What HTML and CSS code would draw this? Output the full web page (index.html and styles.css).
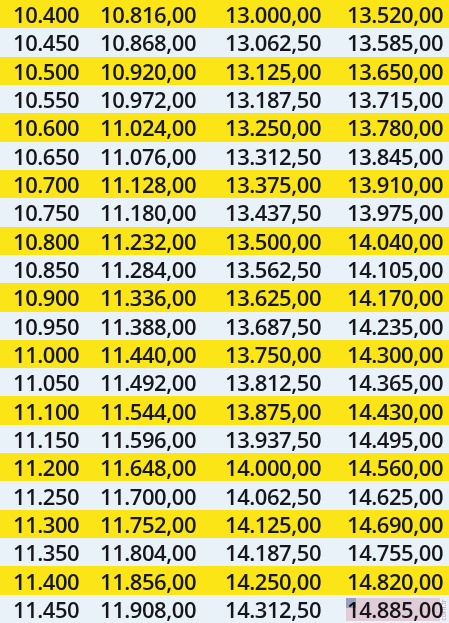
FILE: index.html
```html
<!DOCTYPE html>
<html lang="tr">
<head>
<meta charset="utf-8">
<title>Tablo</title>
<link rel="stylesheet" href="styles.css">
</head>
<body>
<div class="table">
  <div class="row y"><span>10.400</span><span>10.816,00</span><span>13.000,00</span><span>13.520,00</span></div>
  <div class="row l"><span>10.450</span><span>10.868,00</span><span>13.062,50</span><span>13.585,00</span></div>
  <div class="row y"><span>10.500</span><span>10.920,00</span><span>13.125,00</span><span>13.650,00</span></div>
  <div class="row l"><span>10.550</span><span>10.972,00</span><span>13.187,50</span><span>13.715,00</span></div>
  <div class="row y"><span>10.600</span><span>11.024,00</span><span>13.250,00</span><span>13.780,00</span></div>
  <div class="row l"><span>10.650</span><span>11.076,00</span><span>13.312,50</span><span>13.845,00</span></div>
  <div class="row y"><span>10.700</span><span>11.128,00</span><span>13.375,00</span><span>13.910,00</span></div>
  <div class="row l"><span>10.750</span><span>11.180,00</span><span>13.437,50</span><span>13.975,00</span></div>
  <div class="row y"><span>10.800</span><span>11.232,00</span><span>13.500,00</span><span>14.040,00</span></div>
  <div class="row l"><span>10.850</span><span>11.284,00</span><span>13.562,50</span><span>14.105,00</span></div>
  <div class="row y"><span>10.900</span><span>11.336,00</span><span>13.625,00</span><span>14.170,00</span></div>
  <div class="row l"><span>10.950</span><span>11.388,00</span><span>13.687,50</span><span>14.235,00</span></div>
  <div class="row y"><span>11.000</span><span>11.440,00</span><span>13.750,00</span><span>14.300,00</span></div>
  <div class="row l"><span>11.050</span><span>11.492,00</span><span>13.812,50</span><span>14.365,00</span></div>
  <div class="row y"><span>11.100</span><span>11.544,00</span><span>13.875,00</span><span>14.430,00</span></div>
  <div class="row l"><span>11.150</span><span>11.596,00</span><span>13.937,50</span><span>14.495,00</span></div>
  <div class="row y"><span>11.200</span><span>11.648,00</span><span>14.000,00</span><span>14.560,00</span></div>
  <div class="row l"><span>11.250</span><span>11.700,00</span><span>14.062,50</span><span>14.625,00</span></div>
  <div class="row y"><span>11.300</span><span>11.752,00</span><span>14.125,00</span><span>14.690,00</span></div>
  <div class="row l"><span>11.350</span><span>11.804,00</span><span>14.187,50</span><span>14.755,00</span></div>
  <div class="row y"><span>11.400</span><span>11.856,00</span><span>14.250,00</span><span>14.820,00</span></div>
  <div class="row l last"><span>11.450</span><span>11.908,00</span><span>14.312,50</span><span class="wm-cell">14.885,00<span class="wm"><span class="wm-sq"></span><span class="wm-txt">com.tr</span></span></span></div>
</div>
</body>
</html>
```
FILE: styles.css
```css
html, body {
  margin: 0;
  padding: 0;
  background: #e9f1f9;
}
.table {
  width: 449px;
  height: 623px;
  overflow: hidden;
  display: grid;
  grid-template-rows: repeat(22, minmax(0, 1fr));
  font-family: "Open Sans", "Liberation Sans", sans-serif;
  font-weight: 600;
  font-size: 22px;
  line-height: 24px;
  letter-spacing: -0.45px;
  color: #16171d;
}
.row {
  display: grid;
  grid-template-columns: 87px 125px 122px 1fr;
  padding-left: 13px;
  align-items: center;
  white-space: nowrap;
}
.row.y { background: #fbe516; }
.row.l { background: #e9f1f9; }
.wm-cell {
  position: relative;
}
.wm {
  position: absolute;
  left: -1px;
  top: 1px;
  width: 94px;
  height: 23px;
  background: rgba(226, 120, 132, 0.28);
  mix-blend-mode: multiply;
}
.wm-sq {
  position: absolute;
  left: 0;
  top: 0;
  width: 10px;
  height: 10px;
  background: rgba(110, 130, 170, 0.55);
}
.wm-txt {
  position: absolute;
  right: -14px;
  top: 8px;
  font-size: 7px;
  line-height: 8px;
  font-weight: 400;
  letter-spacing: 0;
  color: rgba(200, 90, 100, 0.6);
  transform: rotate(-90deg);
}
```
